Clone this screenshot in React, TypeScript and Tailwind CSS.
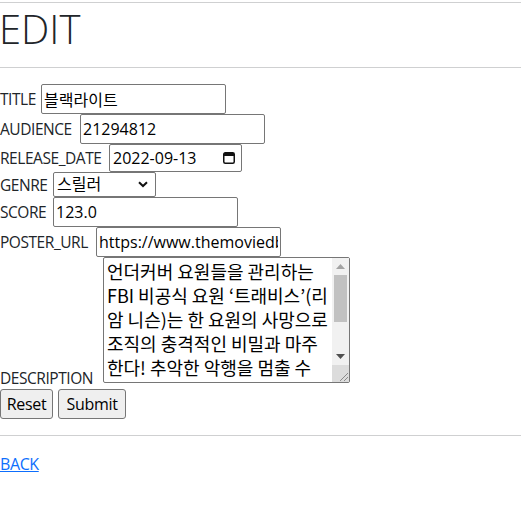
import React from "react";

const desc =
  "언더커버 요원들을 관리하는 FBI 비공식 요원 ‘트래비스’(리암 니슨)는 한 요원의 사망으로 조직의 충격적인 비밀과 마주한다! 추악한 악행을 멈출 수 있는 건 오직 자신뿐, 진실을 밝히기 위한 그의 마지막 작전이 시작된다!";

const font = "font-['Open_Sans','Noto_Sans_CJK_KR',sans-serif]";

function Row({
  label,
  labelW,
  h,
  children,
}: {
  label: string;
  labelW: string;
  h: string;
  children: React.ReactNode;
}) {
  return (
    <div className={`flex items-center gap-[4px] ${h}`}>
      <label className={`${labelW} whitespace-nowrap text-[15.5px] leading-[20px] tracking-[-0.45px] text-[#212529]`}>
        {label}
      </label>
      {children}
    </div>
  );
}

const inputCls =
  "box-border border border-[#767676] rounded-[2px] bg-white px-[2px] text-[16px] text-black outline-none " +
  font;

export default function App() {
  return (
    <div className={`w-[521px] h-[525px] bg-white ${font} text-[#212529]`}>
      <div className="h-[2px]" />
      <div className="h-px bg-[#cfd0d1]" />
      <h1 className="h-[51px] text-[40px] leading-[51px] font-light mb-[13px] -ml-[1px] text-[#212529]">EDIT</h1>
      <div className="h-px bg-[#cfd0d1]" />
      <form className="mt-[16px] flex flex-col" onSubmit={(e) => e.preventDefault()}>
        <Row label="TITLE" labelW="w-[37px]" h="h-[30px]">
          <input className={`${inputCls} w-[185px] h-[30px]`} defaultValue="블랙라이트" />
        </Row>
        <Row label="AUDIENCE" labelW="w-[76px]" h="h-[30px]">
          <input className={`${inputCls} w-[185px] h-[30px]`} defaultValue="21294812" />
        </Row>
        <Row label="RELEASE_DATE" labelW="w-[105px]" h="h-[28px]">
          <div className="relative w-[133px] h-[28px]">
            <input className={`${inputCls} w-[133px] h-[28px] pl-[3px]`} defaultValue="2022-09-13" />
            <svg
              className="pointer-events-none absolute left-[114px] top-[7px]"
              width="12"
              height="13"
              viewBox="0 0 12 13"
            >
              <rect x="0.75" y="1.75" width="10.5" height="10.5" rx="1.5" fill="none" stroke="#111" strokeWidth="1.5" />
              <rect x="1" y="2" width="10" height="3" fill="#111" />
            </svg>
          </div>
        </Row>
        <Row label="GENRE" labelW="w-[49px]" h="h-[25px]">
          <div className="relative w-[103px] h-[25px]">
            <select
              className={`${inputCls} appearance-none w-[103px] h-[25px] py-0 pl-[3px] leading-[23px]`}
              defaultValue="스릴러"
            >
              <option>액션</option>
              <option>스릴러</option>
              <option>드라마</option>
              <option>코미디</option>
            </select>
            <svg
              className="pointer-events-none absolute left-[85px] top-[9px]"
              width="10"
              height="7"
              viewBox="0 0 10 7"
            >
              <path d="M1 1.2 L5 5 L9 1.2" fill="none" stroke="#111" strokeWidth="2" />
            </svg>
          </div>
        </Row>
        <Row label="SCORE" labelW="w-[49px]" h="h-[30px]">
          <input className={`${inputCls} w-[185px] h-[30px]`} defaultValue="123.0" />
        </Row>
        <Row label="POSTER_URL" labelW="w-[92px]" h="h-[30px]">
          <input
            className={`${inputCls} w-[185px] h-[30px]`}
            defaultValue="https://www.themoviedb.org/t/p/w600_and_h900_bestv2/blacklight.jpg"
          />
        </Row>
        <div className="flex items-start gap-[4px] h-[132px]">
          <label className="w-[99px] self-end mb-[1px] whitespace-nowrap text-[15.5px] leading-[20px] tracking-[-0.45px] text-[#212529]">
            DESCRIPTION
          </label>
          <div className="relative w-[247px] h-[126px]">
            <textarea
              className={`box-border w-[247px] h-[126px] border border-[#767676] rounded-[2px] bg-white pl-[3px] pr-[18px] pt-[1px] text-[18px] leading-[24px] text-black resize-none overflow-hidden outline-none font-['Noto_Sans_CJK_KR',sans-serif]`}
              defaultValue={desc}
            />
            <div className="pointer-events-none absolute right-[1px] top-[1px] w-[17px] h-[124px] bg-[#f1f1f1] flex flex-col">
              <div className="h-[17px] flex items-center justify-center">
                <svg width="9" height="5" viewBox="0 0 9 5">
                  <path d="M0 5 L4.5 0 L9 5 Z" fill="#a3a3a3" />
                </svg>
              </div>
              <div className="h-[47px] mx-[2px] bg-[#c1c1c1]" />
              <div className="flex-1" />
              <div className="h-[17px] flex items-center justify-center">
                <svg width="9" height="5" viewBox="0 0 9 5">
                  <path d="M0 0 L9 0 L4.5 5 Z" fill="#505050" />
                </svg>
              </div>
              <div className="h-[17px] bg-[#dcdcdc] flex items-end justify-end">
                <svg width="12" height="12" viewBox="0 0 12 12">
                  <path d="M11 3 L3 11 M11 7 L7 11" stroke="#8a8a8a" strokeWidth="1" />
                </svg>
              </div>
            </div>
          </div>
        </div>
        <div className="flex gap-[5px] h-[30px]">
          <button
            type="reset"
            className={`w-[53px] h-[30px] border border-[#767676] rounded-[3px] bg-[#efefef] text-[16px] tracking-[-0.3px] text-black ${font}`}
          >
            Reset
          </button>
          <button
            type="submit"
            className={`w-[68px] h-[30px] border border-[#767676] rounded-[3px] bg-[#efefef] text-[16px] tracking-[-0.3px] text-black ${font}`}
          >
            Submit
          </button>
        </div>
      </form>
      <div className="mt-[16px] h-px bg-[#cfd0d1]" />
      <div className="mt-[18px] leading-[20px]">
        <a href="#" className="text-[16px] tracking-[-0.4px] text-[#0d6efd] underline">
          BACK
        </a>
      </div>
    </div>
  );
}
